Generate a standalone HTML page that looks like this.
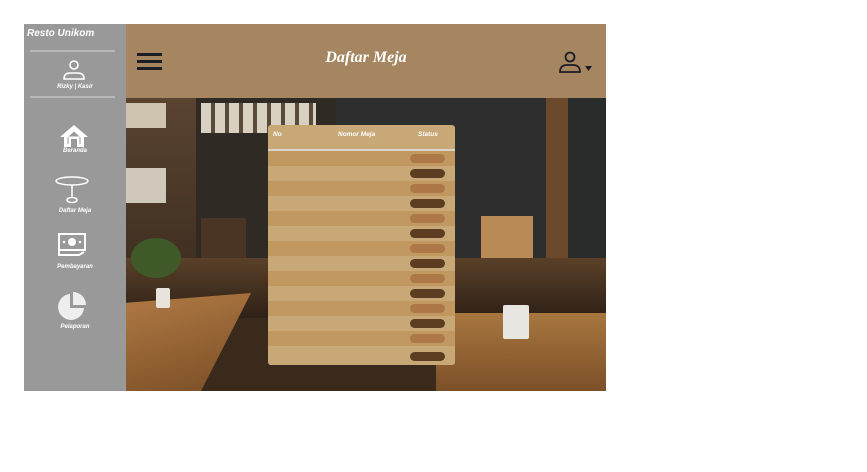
<!DOCTYPE html>
<html><head><meta charset="utf-8"><style>
*{margin:0;padding:0;box-sizing:border-box}
body{width:867px;height:472px;background:#fff;position:relative;overflow:hidden;font-family:"Liberation Sans",sans-serif}
.a{position:absolute}
#side{left:24px;top:24px;width:102px;height:367px;background:#999}
#side .t{left:3px;top:4px;color:#fff;font-size:10px;font-weight:bold;font-style:italic}
.hr{left:6px;width:85px;height:2px;background:#b8b8b8}
.lbl{width:102px;text-align:center;color:#fff;font-size:6px;font-weight:bold;font-style:italic}
#hdr{left:126px;top:24px;width:480px;height:74px;background:#a58660}
#bg{left:126px;top:98px;width:480px;height:293px;overflow:hidden;background:#3a2a1c}
#tbl{left:268px;top:125px;width:187px;height:240px;background:#c9a878;border-radius:3px;overflow:hidden}
.row{position:absolute;left:0;width:187px;height:15px}
.pill{position:absolute;left:142px;width:35px;height:9px;border-radius:5px}
.th{position:absolute;top:6px;color:#fff;font-size:6.5px;font-weight:bold;font-style:italic}
</style></head><body>
<div id="side" class="a">
 <div class="a t">Resto Unikom</div>
 <div class="a hr" style="top:26px"></div>
 <svg class="a" style="left:37px;top:35px" width="26" height="22" viewBox="0 0 26 22"><circle cx="13" cy="6" r="4" fill="none" stroke="#fff" stroke-width="1.6"/><path d="M3 20 Q3 14 9 14 H17 Q23 14 23 20 Z" fill="none" stroke="#fff" stroke-width="1.6"/></svg>
 <div class="a lbl" style="top:60px">Rizky | Kasir</div>
 <div class="a hr" style="top:72px"></div>
 <svg class="a" style="left:35px;top:100px" width="30" height="24" viewBox="0 0 30 24"><path d="M15 1 L1 13 L5 13 L5 23 L12 23 L12 15 L18 15 L18 23 L25 23 L25 13 L29 13 Z" fill="#fff"/><path d="M8.5 20 V13.5 L15 7.5 L21.5 13.5 V20 H20.5 V12.5 H9.5 V20 Z" fill="#999"/></svg>
 <div class="a lbl" style="top:124px">Beranda</div>
 <svg class="a" style="left:30px;top:152px" width="36" height="28" viewBox="0 0 36 28"><ellipse cx="18" cy="5" rx="16" ry="4" fill="none" stroke="#fff" stroke-width="1.5"/><line x1="18" y1="9" x2="18" y2="21" stroke="#fff" stroke-width="1.5"/><ellipse cx="18" cy="24" rx="5" ry="2.5" fill="none" stroke="#fff" stroke-width="1.5"/></svg>
 <div class="a lbl" style="top:184px">Daftar Meja</div>
 <svg class="a" style="left:33px;top:208px" width="30" height="26" viewBox="0 0 30 26"><rect x="2" y="2" width="26" height="16" fill="none" stroke="#fff" stroke-width="2"/><circle cx="15" cy="10" r="4" fill="#fff"/><circle cx="7" cy="10" r="1.3" fill="#fff"/><circle cx="23" cy="10" r="1.3" fill="#fff"/><path d="M2 19 V23 H22 L27 20" fill="none" stroke="#fff" stroke-width="2"/></svg>
 <div class="a lbl" style="top:240px">Pembayaran</div>
 <svg class="a" style="left:32px;top:266px" width="32" height="32" viewBox="0 0 32 32"><path d="M14 4 A13 13 0 1 0 28 18 L14 18 Z" fill="#eee"/><path d="M17 2 A13 13 0 0 1 30 15 L17 15 Z" fill="#eee"/></svg>
 <div class="a lbl" style="top:300px">Pelaporan</div>
</div>
<div id="hdr" class="a">
 <div class="a" style="left:11px;top:29px;width:25px;height:3px;background:#1c1c24;box-shadow:0 7px 0 #1c1c24,0 14px 0 #1c1c24"></div>
 <div class="a" style="left:0;width:480px;top:25px;text-align:center;color:#fff;font-family:'Liberation Serif',serif;font-style:italic;font-weight:bold;font-size:16px">Daftar Meja</div>
 <svg class="a" style="left:432px;top:27px" width="40" height="22" viewBox="0 0 40 22"><circle cx="12" cy="6" r="4.5" fill="none" stroke="#1c1c24" stroke-width="1.8"/><path d="M2 21 Q2 14 9 14 H15 Q22 14 22 21 Z" fill="none" stroke="#1c1c24" stroke-width="1.8"/><path d="M27 15 H34 L30.5 20 Z" fill="#1c1c24"/></svg>
</div>
<div id="bg" class="a">
 <div class="a" style="left:0;top:0;width:70px;height:293px;background:linear-gradient(#5a4430,#2c2016)"></div>
 <div class="a" style="left:70px;top:0;width:140px;height:170px;background:#2f2a24"></div>
 <div class="a" style="left:75px;top:5px;width:115px;height:30px;background:repeating-linear-gradient(90deg,#d8d0c0 0 10px,#5a4a3a 10px 14px)"></div>
 <div class="a" style="left:0;top:5px;width:40px;height:25px;background:#cfc4b0"></div>
 <div class="a" style="left:0;top:70px;width:40px;height:35px;background:#d0c8bb"></div>
 <div class="a" style="left:210px;top:0;width:210px;height:180px;background:#2d2e2d"></div>
 <div class="a" style="left:420px;top:0;width:22px;height:170px;background:#6b4a2c"></div>
 <div class="a" style="left:442px;top:0;width:38px;height:165px;background:#2a2c2c"></div>
 <div class="a" style="left:355px;top:118px;width:52px;height:45px;background:#b88a55"></div>
 <div class="a" style="left:75px;top:120px;width:45px;height:45px;background:#4a3424"></div>
 <div class="a" style="left:0;top:160px;width:480px;height:60px;background:linear-gradient(#5a4028,#2e2116)"></div>
 <div class="a" style="left:0;top:195px;width:125px;height:98px;background:linear-gradient(165deg,#b07a44,#7a4e26);clip-path:polygon(0 10%,100% 0,60% 100%,0 100%)"></div>
 <div class="a" style="left:310px;top:215px;width:170px;height:78px;background:linear-gradient(#a8773f,#7c5028)"></div>
 <div class="a" style="left:30px;top:190px;width:14px;height:20px;background:#e8e4dc;border-radius:2px"></div>
 <div class="a" style="left:377px;top:207px;width:26px;height:34px;background:#e8e6e0;border-radius:2px"></div>
 <div class="a" style="left:5px;top:140px;width:50px;height:40px;background:#3f5a28;border-radius:50%"></div>
</div>
<div id="tbl" class="a">
 <div class="th" style="left:5px">No</div>
 <div class="th" style="left:70px">Nomor Meja</div>
 <div class="th" style="left:150px">Status</div>
 <div class="a" style="left:0;top:24px;width:187px;height:2px;background:#d8d4cc"></div>
 <div class="row" style="top:26px;background:#c09860"><div class="pill" style="top:3px;background:#ad7748"></div></div>
 <div class="row" style="top:41px;background:#c9a878"><div class="pill" style="top:3px;background:#5c3d22"></div></div>
 <div class="row" style="top:56px;background:#c09860"><div class="pill" style="top:3px;background:#ad7748"></div></div>
 <div class="row" style="top:71px;background:#c9a878"><div class="pill" style="top:3px;background:#5c3d22"></div></div>
 <div class="row" style="top:86px;background:#c09860"><div class="pill" style="top:3px;background:#ad7748"></div></div>
 <div class="row" style="top:101px;background:#c9a878"><div class="pill" style="top:3px;background:#5c3d22"></div></div>
 <div class="row" style="top:116px;background:#c09860"><div class="pill" style="top:3px;background:#ad7748"></div></div>
 <div class="row" style="top:131px;background:#c9a878"><div class="pill" style="top:3px;background:#5c3d22"></div></div>
 <div class="row" style="top:146px;background:#c09860"><div class="pill" style="top:3px;background:#ad7748"></div></div>
 <div class="row" style="top:161px;background:#c9a878"><div class="pill" style="top:3px;background:#5c3d22"></div></div>
 <div class="row" style="top:176px;background:#c09860"><div class="pill" style="top:3px;background:#ad7748"></div></div>
 <div class="row" style="top:191px;background:#c9a878"><div class="pill" style="top:3px;background:#5c3d22"></div></div>
 <div class="row" style="top:206px;background:#c09860"><div class="pill" style="top:3px;background:#ad7748"></div></div>
 <div class="row" style="top:221px;height:19px;background:#c9a878"><div class="pill" style="top:6px;background:#5c3d22"></div></div>
</div>
</body></html>
